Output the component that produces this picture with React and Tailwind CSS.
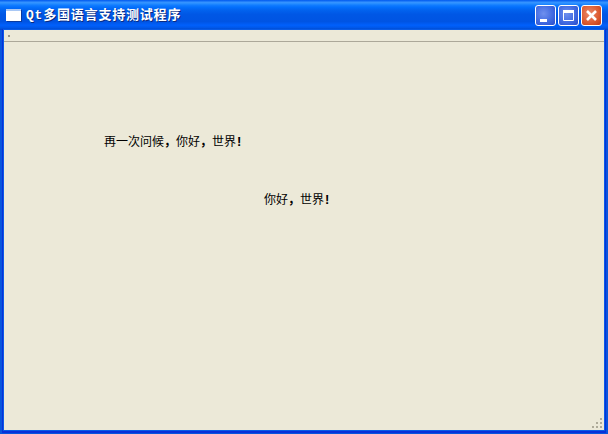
const cjk = "font-['Liberation_Sans','Noto_Sans_CJK_SC',sans-serif]";
const blueBtn = "bg-[radial-gradient(circle_at_40%_40%,#6f90ee,#3f68e0_60%,#2a4cc8)]";
const redBtn = "bg-[radial-gradient(circle_at_40%_40%,#ea8a6c,#dc5a30_60%,#c03a16)]";

const WinButton = ({ className, children }) => (
  <div className={`w-[21px] h-[21px] rounded-[3px] border border-white flex items-center justify-center overflow-hidden ${className}`}>
    <svg width="19" height="19" viewBox="0 0 19 19">{children}</svg>
  </div>
);

// the small bold exclamation mark sits in half a cell
const Bang = () => <span className="inline-block w-[6px] ml-[1px] font-black text-[13px] leading-none">!</span>;
const Comma = () => <span className="font-bold">{"\uFF0C"}</span>;

const App = () => {
  return (
    <div className={`w-[608px] h-[434px] flex flex-col bg-[#0855dd] overflow-hidden ${cjk}`}>
      {/* Title bar */}
      <div className="h-[30px] shrink-0 flex items-center pl-[6px] pr-[6px] bg-[linear-gradient(180deg,#0058ee_0%,#3593ff_8%,#288eff_12%,#127dff_17%,#036ffc_24%,#0262ee_34%,#0057e5_48%,#0054e3_72%,#0060fc_84%,#0058ea_92%,#0046c8_100%)]">
        <div className="w-[15px] h-[12px] bg-white border-t-[2px] border-[#a9c8f5] mr-[5px] shadow-[1px_1px_0_#0a3a9e]" />
        <span className="text-white text-[13px] font-bold leading-none flex-1 [text-shadow:1px_1px_0_#0a2a80] font-['Liberation_Mono','Noto_Sans_CJK_SC',monospace] tracking-[0.8px]">
          Qt多国语言支持测试程序
        </span>
        <div className="flex gap-[2px]">
          <WinButton className={blueBtn}>
            <rect x="4" y="13" width="7" height="3" fill="#fff" />
          </WinButton>
          <WinButton className={blueBtn}>
            <path d="M4.5 5.5h10v9h-10z" fill="none" stroke="#fff" />
            <rect x="4" y="4" width="11" height="3" fill="#fff" />
          </WinButton>
          <WinButton className={redBtn}>
            <path d="M5 5l9 9M14 5l-9 9" stroke="#fff" strokeWidth="2.6" />
          </WinButton>
        </div>
      </div>

      {/* Client area */}
      <div className="flex-1 flex flex-col mx-[4px] mb-[4px] bg-[#ece9d8] min-h-0 shadow-[0_0_0_1px_#0a5ce6,0_1px_0_2px_#0831d9]">
        <div className="h-[12px] shrink-0 border-b border-[#aca899] pl-[4px] pt-[5px]">
          <div className="w-[2px] h-[2px] bg-[#9a978a]" />
        </div>
        <div className="flex-1 relative text-[12px] leading-[16px] text-black">
          <p className="ml-[100px] mt-[92px]">再一次问候<Comma />你好<Comma />世界<Bang /></p>
          <p className="ml-[260px] mt-[42px]">你好<Comma />世界<Bang /></p>
          {/* Size grip */}
          <svg className="absolute right-0 bottom-0" width="12" height="12" viewBox="0 0 12 12" fill="#aeab99">
            <rect x="8" y="0" width="2" height="2" />
            <rect x="4" y="4" width="2" height="2" />
            <rect x="8" y="4" width="2" height="2" />
            <rect x="0" y="8" width="2" height="2" />
            <rect x="4" y="8" width="2" height="2" />
            <rect x="8" y="8" width="2" height="2" />
          </svg>
        </div>
      </div>
    </div>
  );
};

export default App;
